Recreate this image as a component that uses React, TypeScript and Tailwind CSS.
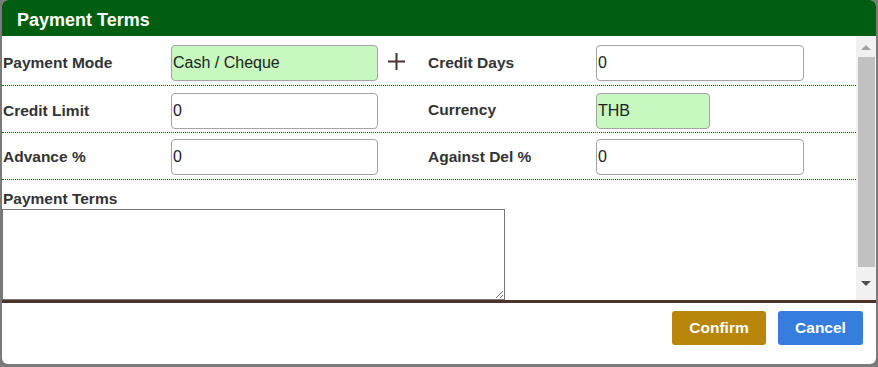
import React from 'react'

const font = { fontFamily: '"Liberation Sans", Arial, sans-serif' }

function Plus() {
  return (
    <svg width="17" height="17" viewBox="0 0 17 17" className="shrink-0">
      <path d="M8.5 0v17M0 8.5h17" stroke="#4a3434" strokeWidth="2" />
    </svg>
  )
}

function Field({ value, green, width = 'w-[207px]' }: { value: string; green?: boolean; width?: string }) {
  return (
    <input
      readOnly
      value={value}
      className={`${width} h-[36px] rounded-[4px] border border-[#a3a3a3] px-[1px] text-[16px] text-[#222] outline-none ${
        green ? 'bg-[#c6f8c0]' : 'bg-white'
      }`}
    />
  )
}

function ScrollBar() {
  return (
    <div className="flex w-[20px] shrink-0 flex-col items-center bg-[#f1f1f1] pt-[1px]">
      <div className="flex h-[20px] w-full items-center justify-center">
        <div className="h-0 w-0 border-x-[5px] border-b-[5px] border-x-transparent border-b-[#a3a3a3]" />
      </div>
      <div className="h-[210px] w-[17px] bg-[#c1c1c1]" />
      <div className="flex h-[33px] w-full items-center justify-center">
        <div className="h-0 w-0 border-x-[5px] border-t-[5px] border-x-transparent border-t-[#505050]" />
      </div>
    </div>
  )
}

export default function App() {
  return (
    <div className="w-[878px] h-[367px] bg-[#7a7a7a] pl-[2px] pr-[2px] pb-[3px]" style={font}>
      <div className="flex h-full flex-col overflow-hidden rounded-[6px] bg-white">
        <div className="h-[36px] shrink-0 bg-[#005e10] pl-[15px] pt-[7px] text-[18px] font-bold text-white">
          Payment Terms
        </div>

        <div className="flex h-[264px] shrink-0">
          <div className="flex-1 overflow-hidden">
            <div className="flex h-[50px] items-center border-b border-dotted border-[#006400] pt-[5px]">
              <label className="w-[169px] pl-[1px] text-[15.5px] font-bold text-[#333]">Payment Mode</label>
              <Field value="Cash / Cheque" green />
              <div className="flex w-[50px] justify-center pr-[14px] pb-[4px]">
                <Plus />
              </div>
              <label className="w-[168px] text-[15.5px] font-bold text-[#333]">Credit Days</label>
              <Field value="0" width="w-[208px]" />
            </div>

            <div className="flex h-[47px] items-center border-b border-dotted border-[#006400] pt-[4px]">
              <label className="w-[169px] pl-[1px] text-[15.5px] font-bold text-[#333]">Credit Limit</label>
              <Field value="0" />
              <div className="w-[50px]" />
              <label className="w-[168px] pb-[3px] text-[15.5px] font-bold text-[#333]">Currency</label>
              <Field value="THB" green width="w-[114px]" />
            </div>

            <div className="flex h-[47px] items-center border-b border-dotted border-[#006400] pt-[2px]">
              <label className="w-[169px] pl-[1px] text-[15.5px] font-bold text-[#333]">Advance %</label>
              <Field value="0" />
              <div className="w-[50px]" />
              <label className="w-[168px] text-[15.5px] font-bold text-[#333]">Against Del %</label>
              <Field value="0" width="w-[208px]" />
            </div>

            <div className="pt-[9px] pb-[14px]">
              <label className="block pl-[1px] text-[15.5px] font-bold leading-[20px] text-[#333]">Payment Terms</label>
              <textarea className="block h-[91px] w-[503px] border border-[#767676] outline-none" />
            </div>
          </div>
          <ScrollBar />
        </div>

        <div className="h-[3px] shrink-0 bg-[#4e322c]" />

        <div className="flex flex-1 items-start justify-end gap-[12px] pr-[13px] pt-[8px]">
          <button className="h-[34px] w-[94px] rounded-[3px] bg-[#b8860b] text-[15.5px] font-bold text-white">
            Confirm
          </button>
          <button className="h-[34px] w-[85px] rounded-[3px] bg-[#367ede] text-[15.5px] font-bold text-white">
            Cancel
          </button>
        </div>
      </div>
    </div>
  )
}
